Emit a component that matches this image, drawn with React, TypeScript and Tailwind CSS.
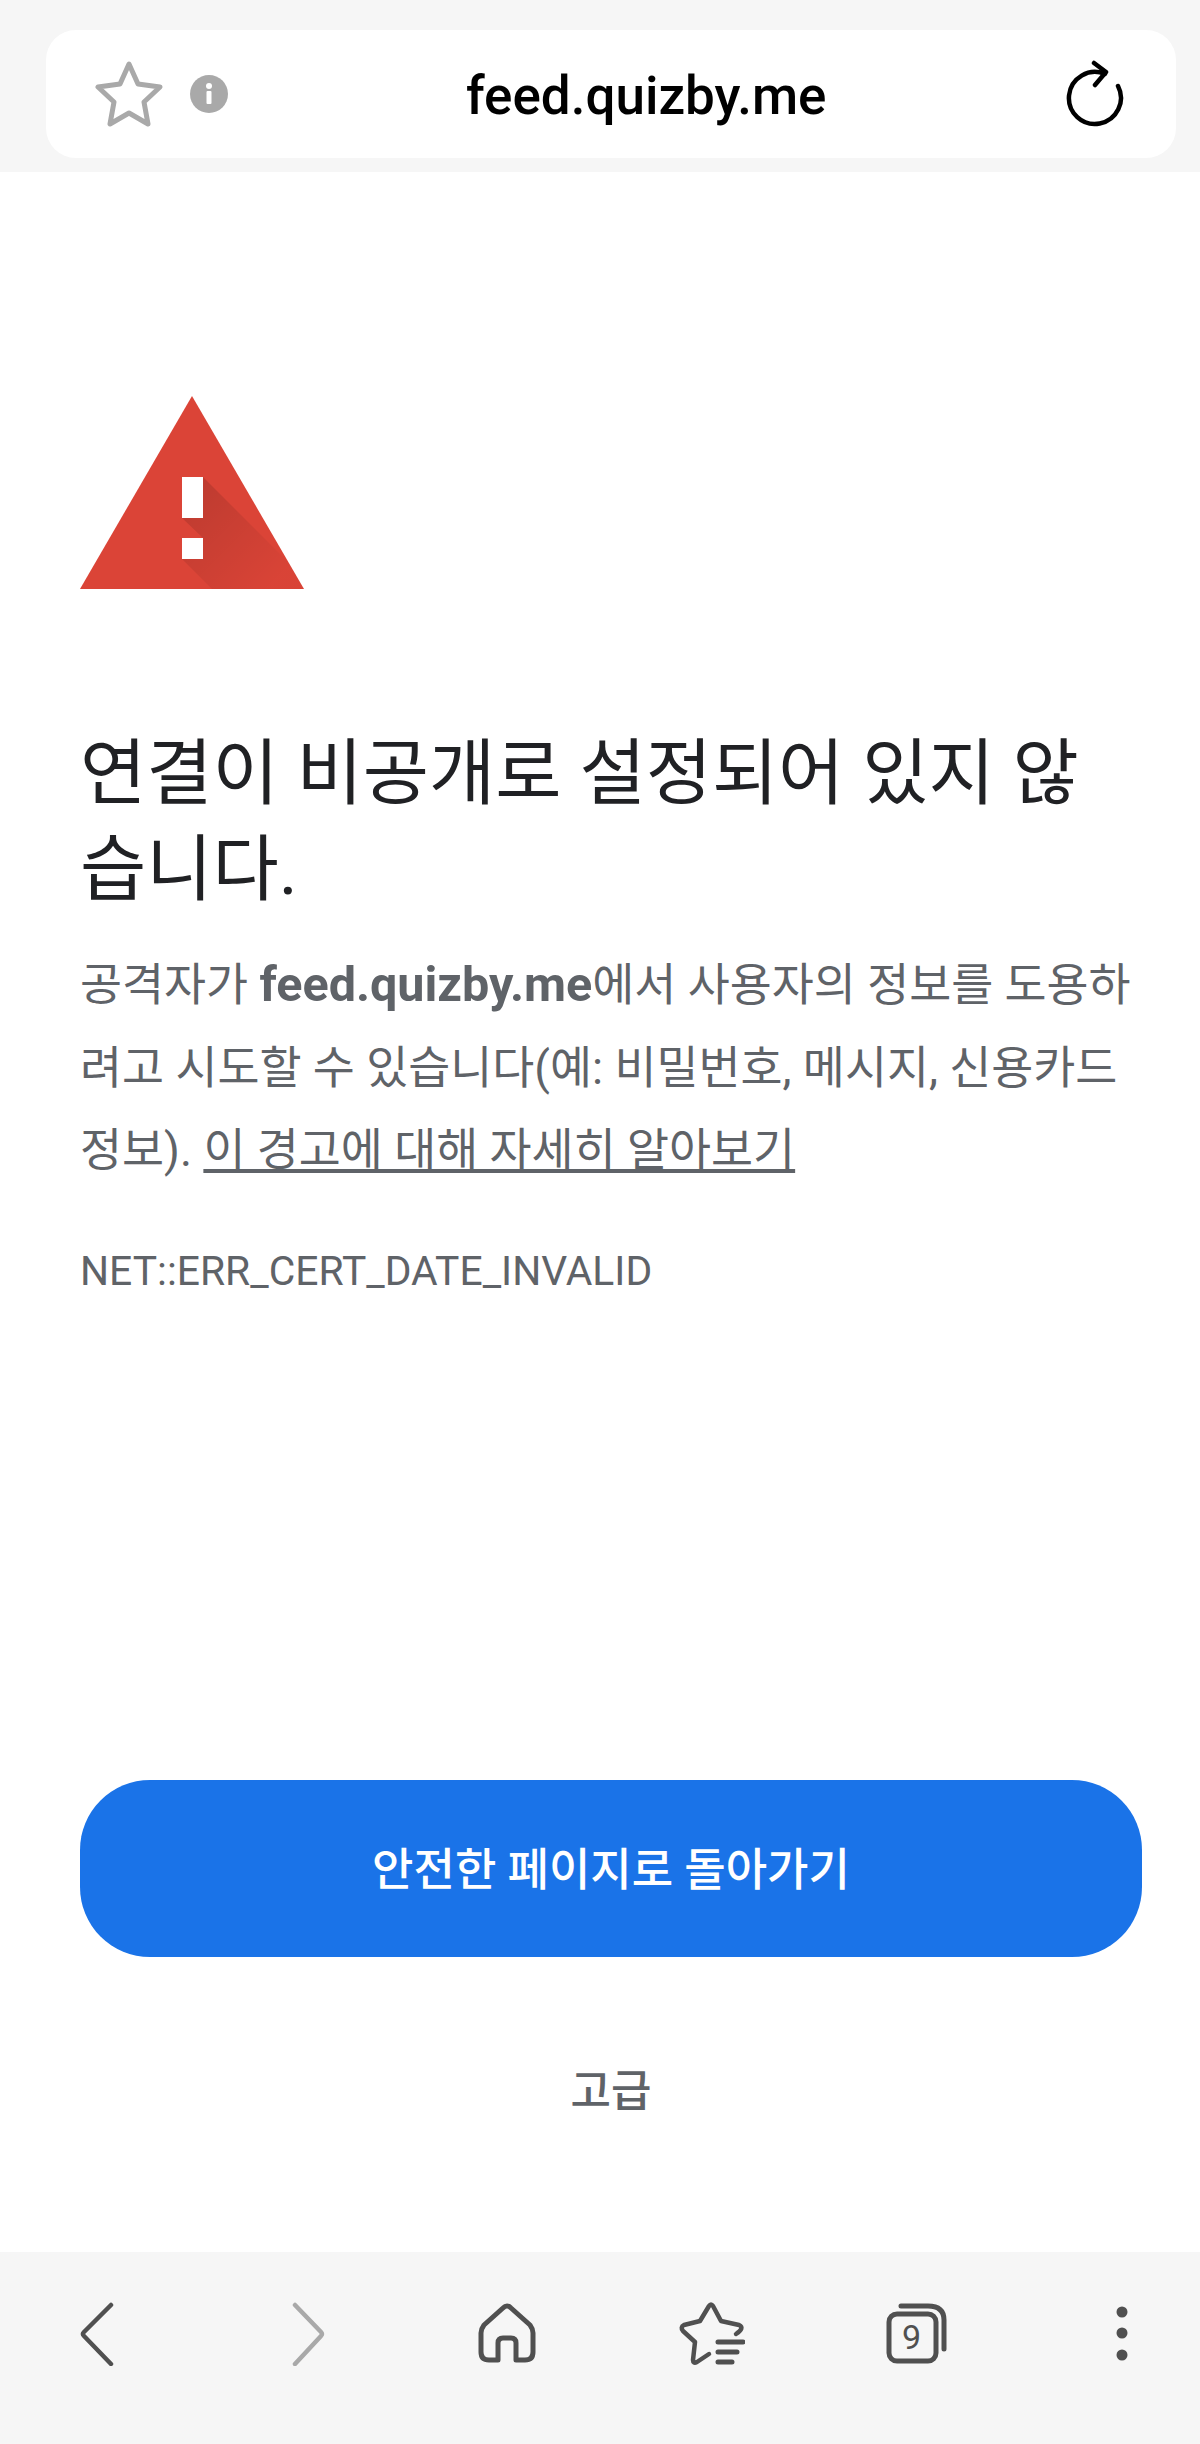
import React from 'react'

const sans = 'font-["Roboto","Noto_Sans_CJK_KR",sans-serif]'

// Google's red warning triangle with the long shadow under the mark
const WarningTriangle = () => (
  <svg width="224" height="193" viewBox="0 0 224 193" className="block">
    <defs>
      <linearGradient id="markShadow" x1="110" y1="100" x2="195" y2="185" gradientUnits="userSpaceOnUse">
        <stop offset="0" stopColor="#000" stopOpacity="0.13" />
        <stop offset="1" stopColor="#000" stopOpacity="0.01" />
      </linearGradient>
    </defs>
    <path d="M112 0 L224 193 L0 193 Z" fill="#db4437" />
    <path d="M123 81 L209 167 L224 193 L132 193 L102 163 L123 163 L123 142 L102 122 L123 122 Z" fill="url(#markShadow)" />
    <rect x="102" y="81" width="21" height="41" fill="#fff" />
    <rect x="102" y="142" width="21" height="21" fill="#fff" />
  </svg>
)

const StarOutline = () => (
  <svg width="68" height="66" viewBox="0 0 68 66" fill="none" stroke="#a9a9a9" strokeWidth="5" strokeLinejoin="round" className="block">
    <path d="M34 3 L43 23 L65 26 L49 41 L53 63 L34 52 L15 63 L19 41 L3 26 L25 23 Z" />
  </svg>
)

const InfoDot = () => (
  <svg width="38" height="38" viewBox="0 0 38 38" className="block">
    <circle cx="19" cy="19" r="19" fill="#a9a9a9" />
    <rect x="16.5" y="16" width="5" height="13" rx="1" fill="#fff" />
    <circle cx="19" cy="11" r="3" fill="#fff" />
  </svg>
)

const Reload = () => (
  <svg width="60" height="68" viewBox="0 0 60 68" fill="none" stroke="#000" strokeWidth="4.5" strokeLinecap="round" strokeLinejoin="round" className="block">
    <path d="M39 14 A26 26 0 1 0 52 26" />
    <path d="M28 3 L40 12 L29 25" />
  </svg>
)

const tone = '#505050'

const navIcons = [
  <svg key="back" width="60" height="64" viewBox="0 0 60 64" fill="none" stroke={tone} strokeWidth="4.5" strokeLinecap="round" strokeLinejoin="round" className="shrink-0">
    <path d="M44 3 L17 30 Q15 32 17 34 L44 62" />
  </svg>,
  <svg key="fwd" width="60" height="64" viewBox="0 0 60 64" fill="none" stroke="#a9a9a9" strokeWidth="4.5" strokeLinecap="round" strokeLinejoin="round" className="shrink-0">
    <path d="M23 3 L49 30 Q51 32 49 34 L23 62" />
  </svg>,
  <svg key="home" width="60" height="64" viewBox="0 0 60 64" fill="none" stroke={tone} strokeWidth="5" strokeLinejoin="round" className="shrink-0">
    <path d="M30 4 Q28 4 26 6 L7 23 Q4 27 4 31 L4 50 Q4 58 12 58 L21 58 L21 41 Q21 36 26 36 L34 36 Q39 36 39 41 L39 58 L48 58 Q56 58 56 50 L56 31 Q56 27 53 23 L34 6 Q32 4 30 4 Z" />
  </svg>,
  <svg key="star" width="66" height="64" viewBox="0 0 66 64" fill="none" stroke={tone} strokeWidth="4.5" strokeLinecap="round" strokeLinejoin="round" className="shrink-0">
    <path d="M57 32 Q66 26 60 23 L42 19 L34 4 Q32 1 30 4 L21 19 L5 23 Q1 25 4 29 L16 40 L14 58 Q14 62 18 60 L30 52" />
    <path d="M39 40 L64 40 M39 50 L58 50 M39 60 L53 60" strokeWidth="5" />
  </svg>,
  <svg key="tabs" width="62" height="64" viewBox="0 0 62 64" fill="none" stroke={tone} strokeWidth="5" strokeLinecap="round" className="shrink-0">
    <rect x="3" y="12" width="47" height="47" rx="8" />
    <path d="M15 4 L42 4 Q58 4 58 18 L58 47" />
    <text x="25.5" y="47" textAnchor="middle" fontFamily="Roboto, sans-serif" fontSize="34" fill={tone} stroke="none">9</text>
  </svg>,
  <svg key="more" width="60" height="64" viewBox="0 0 60 64" fill={tone} className="shrink-0">
    <circle cx="30" cy="10" r="5.5" />
    <circle cx="30" cy="31" r="5.5" />
    <circle cx="30" cy="53" r="5.5" />
  </svg>,
]

export default function App() {
  return (
    <div className={`flex h-[2444px] w-[1200px] flex-col bg-white ${sans}`}>
      {/* Address bar */}
      <div className="h-[172px] shrink-0 bg-[#f6f6f6] pl-[46px] pr-[24px] pt-[30px]">
        <div className="relative flex h-[128px] items-center rounded-[30px] bg-white pl-[49px] pr-[50px]">
          <StarOutline />
          <div className="ml-[27px]"><InfoDot /></div>
          <span className="absolute left-[420px] mt-[4px] text-[53px] font-medium leading-none text-black">feed.quizby.me</span>
          <div className="ml-auto"><Reload /></div>
        </div>
      </div>

      {/* Interstitial body */}
      <main className="flex flex-1 flex-col px-[80px] pt-[224px]">
        <WarningTriangle />
        <h1 className="mt-[137px] w-[1040px] text-[72px] font-normal leading-[96px] text-[#202124]">
          연결이 비공개로 설정되어 있지 않습니다.
        </h1>
        <p className="mt-[26px] w-[1060px] text-[45.7px] leading-[82.5px] text-[#5f6368]">
          공격자가 <strong className="text-[48.5px] font-bold">feed.quizby.me</strong>에서 사용자의 정보를 도용하려고 시도할 수 있습니다(예: 비밀번호, 메시지, 신용카드 정보).{' '}
          <a className="underline">이 경고에 대해 자세히 알아보기</a>
        </p>
        <p className="mt-[54px] text-[40.8px] leading-[48px] text-[#5f6368]">NET::ERR_CERT_DATE_INVALID</p>

        <button className="mt-auto flex h-[177px] w-[1062px] items-center justify-center rounded-[70px] bg-[#1a73e8] pt-[4px] text-[45px] font-medium text-white">
          안전한 페이지로 돌아가기
        </button>
        <div className="mb-[130px] mt-[105px] w-[1062px] text-center text-[44px] font-medium leading-[60px] text-[#5f6368]">고급</div>
      </main>

      {/* Bottom toolbar */}
      <nav className="flex h-[192px] shrink-0 justify-between bg-[#f6f6f6] pl-[67px] pr-[48px] pt-[50px]">
        {navIcons.map((icon, i) => (
          <div key={i} className="flex w-[60px] justify-center">{icon}</div>
        ))}
      </nav>
    </div>
  )
}
